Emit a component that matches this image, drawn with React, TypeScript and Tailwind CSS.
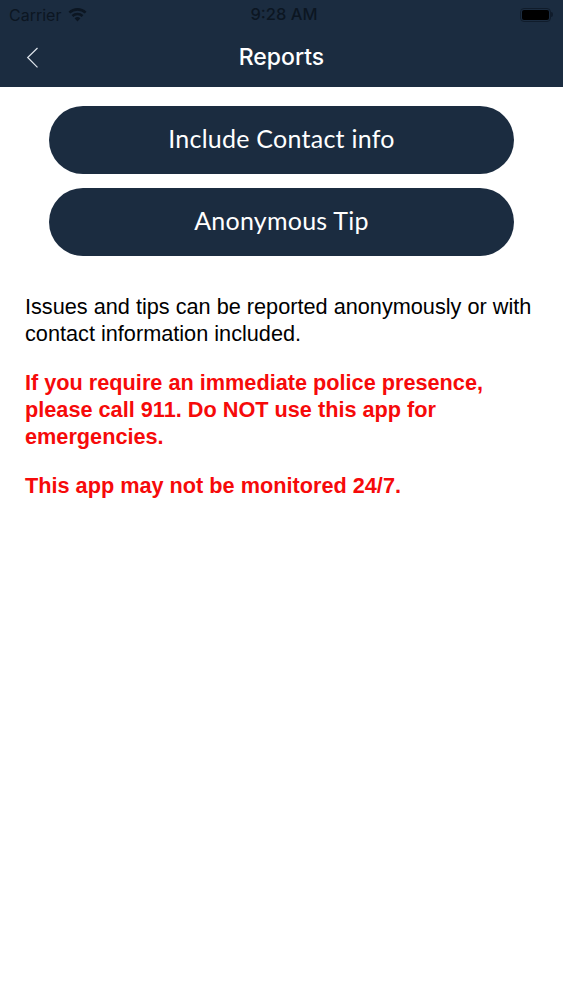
export default function App() {
  return (
    <div className="min-h-[1000px] bg-white font-['Liberation_Sans',sans-serif]">
      {/* Status bar + nav */}
      <div className="h-[87px] bg-[#1b2c40]">
        <div className="flex h-[29px] items-center justify-between pl-[9px] pr-[10px] text-[#0c1622] font-['Inter',sans-serif]">
          <div className="flex w-[126px] items-center gap-[7px] text-[16px]">
            <span>Carrier</span>
            <svg width="19" height="14" viewBox="0 0 19 14" fill="#0c1622">
              <path d="M9.5 13.5 6.6 10.3a4.2 4.2 0 0 1 5.8 0Z" />
              <path d="M5.3 8.9 3.6 7a8.6 8.6 0 0 1 11.8 0l-1.7 1.9a6.1 6.1 0 0 0-8.4 0Z" />
              <path d="M2.3 5.6.5 3.7a13 13 0 0 1 18 0l-1.8 1.9a10.4 10.4 0 0 0-14.4 0Z" />
            </svg>
          </div>
          <span className="text-[16.5px] font-medium">9:28 AM</span>
          <div className="flex w-[120px] items-center justify-end">
            <div className="flex h-[14px] w-[31px] items-center justify-center rounded-[4px] border border-[#101c2b]">
              <div className="h-[10px] w-[27px] rounded-[2px] bg-black" />
            </div>
            <div className="h-[5px] w-[1.5px] rounded-r-sm bg-[#101c2b]" />
          </div>
        </div>
        <div className="flex h-[58px] items-center pl-[26px]">
          <svg width="14" height="22" viewBox="0 0 14 22" fill="none" stroke="#dfe5ec" strokeWidth="1.2">
            <path d="M11.5 1 1.7 10.5l9.8 9.8" />
          </svg>
          <h1 className="ml-[-40px] flex-1 pb-[1px] text-center text-[23px] font-medium text-white font-['Inter',sans-serif]">
            Reports
          </h1>
        </div>
      </div>

      {/* Buttons */}
      <div className="flex flex-col items-center gap-[14px] pt-[19px]">
        <button className="h-[68px] w-[465px] rounded-[34px] bg-[#1b2c40] pb-[2px] text-[25px] tracking-[0.25px] text-white font-['Lato',sans-serif]">
          Include Contact info
        </button>
        <button className="h-[68px] w-[465px] rounded-[34px] bg-[#1b2c40] pb-[2px] text-[25px] tracking-[0.25px] text-white font-['Lato',sans-serif]">
          Anonymous Tip
        </button>
      </div>

      {/* Copy */}
      <div className="px-[25px] pt-[37px] text-[21.7px] leading-[27px]">
        <p className="text-black">
          Issues and tips can be reported anonymously or with contact information included.
        </p>
        <p className="mt-[22px] font-bold text-[#f60a0a]">
          If you require an immediate police presence, please call 911. Do NOT use this app for emergencies.
        </p>
        <p className="mt-[22px] font-bold text-[#f60a0a]">This app may not be monitored 24/7.</p>
      </div>
    </div>
  );
}
